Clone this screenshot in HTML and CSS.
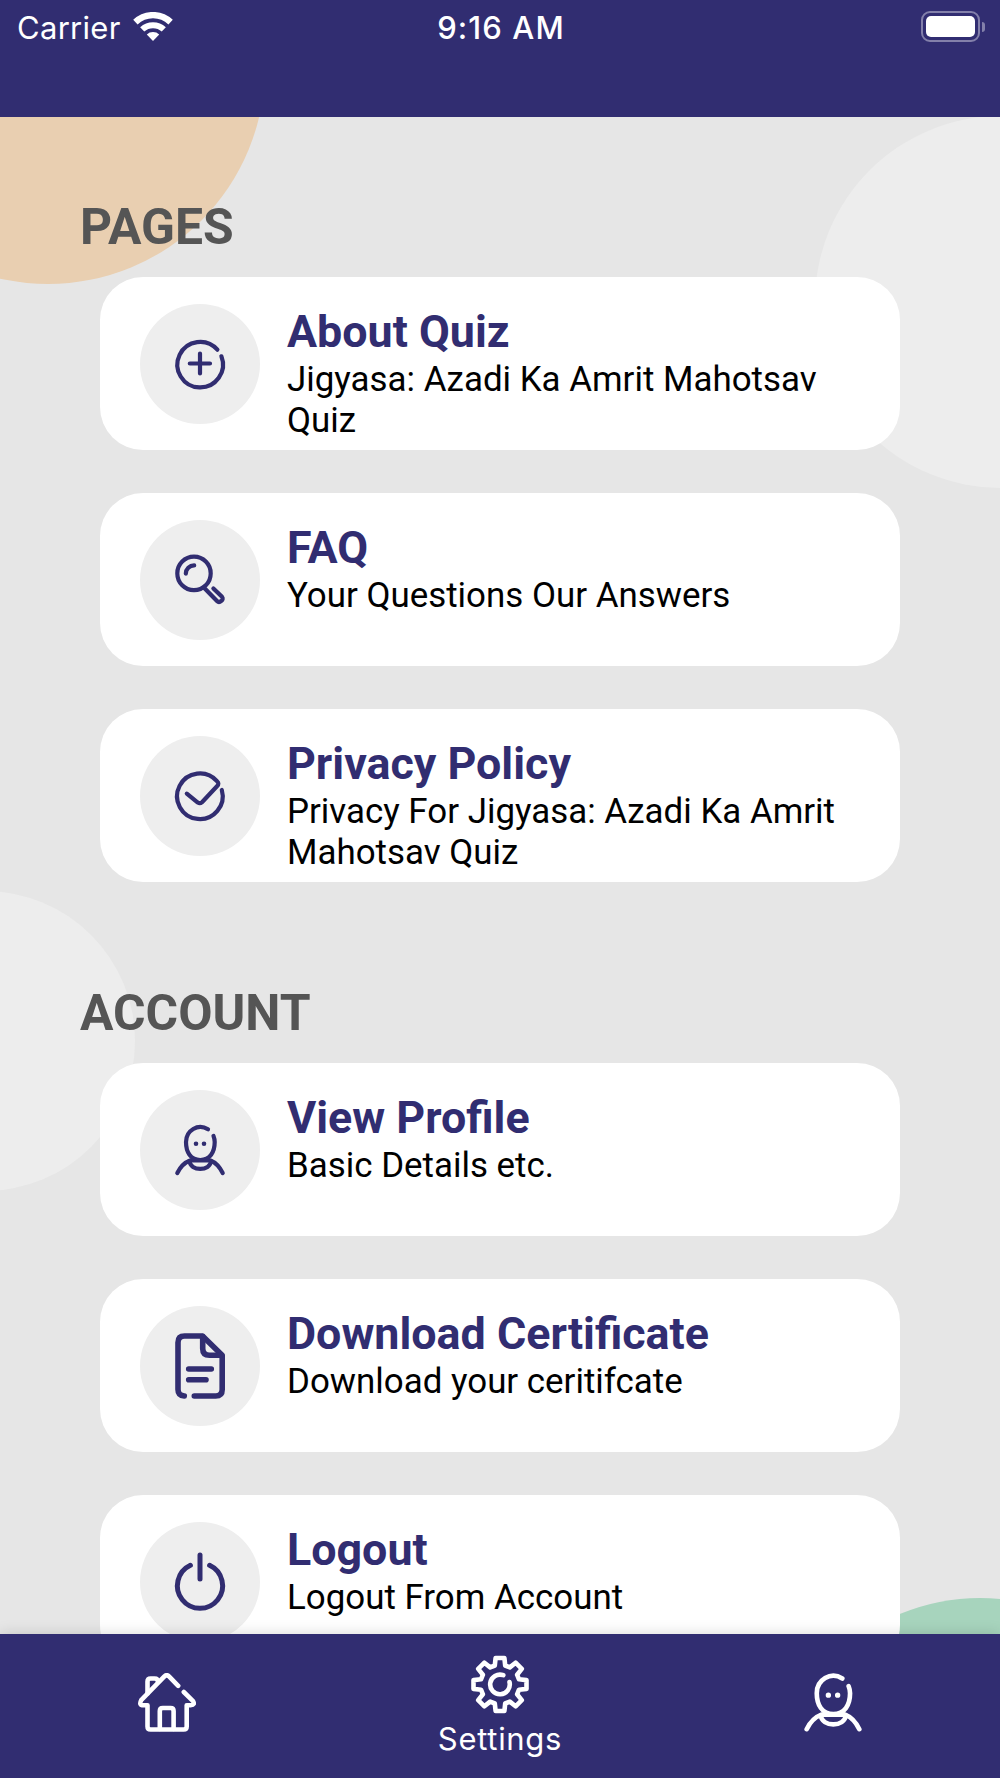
FILE: index.html
```
<!DOCTYPE html>
<html lang="en">
<head>
  <meta charset="UTF-8">
  <meta name="viewport" content="width=device-width, initial-scale=1.0">
  <title>Settings</title>
  <link rel="stylesheet" href="styles.css">
</head>
<body>
  <div class="screen">
    <header class="header">
      <div class="status-left">
        <span class="carrier">Carrier</span>
        <svg class="wifi" viewBox="0 0 40 30">
          <g fill="none" stroke="#fff">
            <path d="M2.4 10.1A25.7 25.7 0 0 1 37.6 10.1" stroke-width="6.4"/>
            <path d="M9.2 17.4A15.8 15.8 0 0 1 30.8 17.4" stroke-width="6"/>
          </g>
          <path d="M20 29L13.8 22.6A9 9 0 0 1 26.2 22.6Z" fill="#fff"/>
        </svg>
      </div>
      <span class="time">9:16 AM</span>
      <div class="status-right">
        <div class="battery"><div class="battery-level"></div></div>
        <div class="battery-tip"></div>
      </div>
    </header>

    <main class="content">
      <div class="blob blob-orange"></div>
      <div class="blob blob-right"></div>
      <div class="blob blob-left"></div>
      <div class="blob blob-green"></div>

      <section class="section">
        <h2 class="section-title">PAGES</h2>
        <div class="card-list">
          <div class="card">
            <div class="card-icon">
              <svg class="icon" viewBox="0 0 120 120">
                <path d="M77.4 45.7A22.8 22.8 0 1 0 81.4 52.3"/>
                <path d="M49.8 59.5H70M60 49.5V69.5"/>
              </svg>
            </div>
            <div class="card-text">
              <h3 class="card-title">About Quiz</h3>
              <p class="card-desc">Jigyasa: Azadi Ka Amrit Mahotsav Quiz</p>
            </div>
          </div>

          <div class="card">
            <div class="card-icon">
              <svg class="icon" viewBox="0 0 120 120">
                <circle cx="54" cy="53.4" r="16.7"/>
                <path d="M45.8 53.6A8.3 8.3 0 0 1 54.2 45.4"/>
                <path d="M63.8 67.5L77 81C79.5 83.5 84.5 79.8 82 76.8L73.4 68.4"/>
              </svg>
            </div>
            <div class="card-text">
              <h3 class="card-title">FAQ</h3>
              <p class="card-desc">Your Questions Our Answers</p>
            </div>
          </div>

          <div class="card">
            <div class="card-icon">
              <svg class="icon" viewBox="0 0 120 120">
                <path d="M81.8 54A22.8 22.8 0 1 1 77 45.2Q79.6 47.6 77.2 50L62 66.2Q60 68 57.8 66.6L46.8 57.6"/>
              </svg>
            </div>
            <div class="card-text">
              <h3 class="card-title">Privacy Policy</h3>
              <p class="card-desc">Privacy For Jigyasa: Azadi Ka Amrit Mahotsav Quiz</p>
            </div>
          </div>
        </div>
      </section>

      <section class="section">
        <h2 class="section-title">ACCOUNT</h2>
        <div class="card-list">
          <div class="card">
            <div class="card-icon">
              <svg class="icon" viewBox="0 0 120 120">
                <path d="M68 39.3C58 33 46 40.5 46 52C46 62 50.5 70 60.3 70C70 70 74.7 62 74.7 52Q74.7 49 73.5 46"/>
                <path d="M37.3 83Q42 73.5 50 70.5H70.5Q78 73.5 82.7 83"/>
                <path d="M49.5 71C50 81.5 70.5 81.5 71 71"/>
                <path class="dots" d="M56 53.7h.01M64 53.7h.01"/>
              </svg>
            </div>
            <div class="card-text">
              <h3 class="card-title">View Profile</h3>
              <p class="card-desc">Basic Details etc.</p>
            </div>
          </div>

          <div class="card">
            <div class="card-icon">
              <svg class="icon icon-bold" viewBox="0 0 120 120">
                <path d="M44.3 90Q38 89.5 38 83.5V36.5Q38 30 44.5 30H62.5L82.2 49.3V83.5Q82.2 90 75.7 90H54.3"/>
                <path d="M62.7 30.5V42.5Q62.7 49.3 69.5 49.3H81.5"/>
                <path d="M48.7 63H71.3M48.7 73.7H66"/>
              </svg>
            </div>
            <div class="card-text">
              <h3 class="card-title">Download Certificate</h3>
              <p class="card-desc">Download your ceritifcate</p>
            </div>
          </div>

          <div class="card">
            <div class="card-icon">
              <svg class="icon icon-power" viewBox="0 0 120 120">
                <path d="M60 33V57"/>
                <path d="M50.4 43.3A22.6 22.6 0 1 0 69.6 43.3"/>
              </svg>
            </div>
            <div class="card-text">
              <h3 class="card-title">Logout</h3>
              <p class="card-desc">Logout From Account</p>
            </div>
          </div>
        </div>
      </section>
    </main>

    <nav class="tab-bar">
      <div class="tab">
        <svg class="tab-icon" viewBox="0 0 58 59">
          <path d="M40.2 12.8L31 3.4Q28.7 1.2 26.4 3.4L3.2 27.2Q0.6 32.3 5.5 32.3H9.5V53.5Q9.5 56.5 12.5 56.5H45.7Q48.7 56.5 48.7 53.5V32.3H52.5Q57.6 32 54.8 27.8L45.8 19"/>
          <path d="M9.5 20.5V8.5Q9.5 5.5 12.5 5.5H16.5Q20 5.5 20 9"/>
          <path d="M21.8 56V38Q21.8 35 24.8 35H32.6Q35.6 35 35.6 38V56"/>
        </svg>
      </div>
      <div class="tab active">
        <svg class="tab-icon" viewBox="-29 -29 58 58">
          <path d="M-5.2 -19L-4.4 -26.5H4.4L5.2 -19L9.8 -17.1L15.6 -21.8L21.8 -15.6L17.1 -9.8L19 -5.2L26.5 -4.4V4.4L19 5.2L17.1 9.8L21.8 15.6L15.6 21.8L9.8 17.1L5.2 19L4.4 26.5H-4.4L-5.2 19L-9.8 17.1L-15.6 21.8L-21.8 15.6L-17.1 9.8L-19 5.2L-26.5 4.4V-4.4L-19 -5.2L-17.1 -9.8L-21.8 -15.6L-15.6 -21.8L-9.8 -17.1Z"/>
          <path d="M3.3 -9.3A9.8 9.8 0 1 0 9.5 -2.4"/>
        </svg>
        <span class="tab-label">Settings</span>
      </div>
      <div class="tab">
        <svg class="tab-icon tab-profile" viewBox="35 35 50 50">
          <path d="M68 39.3C58 33 46 40.5 46 52C46 62 50.5 70 60.3 70C70 70 74.7 62 74.7 52Q74.7 49 73.5 46"/>
          <path d="M37.3 83Q42 73.5 50 70.5H70.5Q78 73.5 82.7 83"/>
          <path d="M49.5 71C50 81.5 70.5 81.5 71 71"/>
          <path class="dots" d="M56 53.7h.01M64 53.7h.01"/>
        </svg>
      </div>
    </nav>
  </div>
</body>
</html>
```
FILE: styles.css
```
* {
  box-sizing: border-box;
  margin: 0;
  padding: 0;
}

body {
  font-family: Roboto, sans-serif;
  background: #e6e6e6;
}

.screen {
  display: flex;
  flex-direction: column;
  width: 1000px;
  height: 1778px;
  overflow: hidden;
}

/* status bar */
.header {
  display: grid;
  grid-template-columns: 1fr auto 1fr;
  align-items: start;
  flex: none;
  height: 117px;
  padding: 8px 15px 0 17px;
  background: #312d71;
  color: #fff;
  font-family: Inter, sans-serif;
  font-size: 31px;
  line-height: 39px;
}

.status-left {
  display: flex;
  gap: 12px;
}

.carrier {
  letter-spacing: 0.3px;
}

.wifi {
  width: 40px;
  height: 30px;
  margin-top: 4px;
}

.time {
  font-weight: 500;
  letter-spacing: 1.1px;
}

.status-right {
  display: flex;
  align-items: center;
  justify-content: flex-end;
  gap: 2px;
  margin-top: 3px;
}

.battery {
  width: 59px;
  height: 31px;
  padding: 3px;
  border: 2px solid #8380aa;
  border-radius: 9px;
}

.battery-level {
  height: 100%;
  border-radius: 5px;
  background: #fff;
}

.battery-tip {
  width: 3px;
  height: 10px;
  border-radius: 0 3px 3px 0;
  background: #8380aa;
}

.content {
  position: relative;
  flex: 1;
  min-height: 0;
  padding: 81px 100px 0 80px;
  overflow: hidden;
}

/* background circles */
.blob {
  position: absolute;
  border-radius: 50%;
}

.blob-orange {
  left: -169px;
  top: -267px;
  width: 434px;
  height: 434px;
  background: #e9cfb1;
}

.blob-right {
  left: 815px;
  top: -1px;
  width: 372px;
  height: 372px;
  background: #ededed;
}

.blob-left {
  left: -165px;
  top: 774px;
  width: 300px;
  height: 300px;
  background: #ededed;
}

.blob-green {
  left: 772px;
  top: 1481px;
  width: 416px;
  height: 416px;
  background: #a7d4bd;
}

.section {
  position: relative;
  margin-bottom: 101.6px;
}

.section-title {
  height: 79.4px;
  color: #555;
  font-size: 49.8px;
  line-height: 59px;
}

.card-list {
  display: flex;
  flex-direction: column;
  gap: 43px;
  padding-left: 20px;
}

.card {
  display: flex;
  gap: 27px;
  height: 173px;
  padding: 26.5px 40px 0;
  border-radius: 43px;
  background: #fff;
}

.card-icon {
  flex: none;
  width: 120px;
  height: 120px;
  border-radius: 50%;
  background: #eee;
}

.icon {
  display: block;
  width: 120px;
  height: 120px;
  fill: none;
  stroke: #312d71;
  stroke-width: 4.2;
  stroke-linecap: round;
  stroke-linejoin: round;
}

.icon-bold {
  stroke-width: 5.6;
}

.icon-power {
  stroke-width: 5;
}

.card-text {
  flex: 1;
  padding-top: 1px;
}

.card-title {
  margin-bottom: 1px;
  color: #312d71;
  font-size: 44.8px;
  line-height: 53px;
}

.card-desc {
  color: #000;
  font-size: 34.9px;
  line-height: 41.3px;
}

/* bottom navigation */
.tab-bar {
  position: relative;
  display: grid;
  grid-template-columns: repeat(3, 1fr);
  flex: none;
  height: 144px;
  background: #312d71;
  box-shadow: 0 0 14px rgba(0, 0, 0, 0.15);
}

.tab {
  display: flex;
  flex-direction: column;
  align-items: center;
  padding-top: 39px;
}

.tab.active {
  padding-top: 21px;
}

.tab-icon {
  width: 58px;
  height: 59px;
  fill: none;
  stroke: #fff;
  stroke-width: 4.6;
  stroke-linecap: round;
  stroke-linejoin: round;
}

.tab-profile {
  stroke-width: 4;
}

.tab-label {
  margin-top: 6px;
  color: #fff;
  font-family: Inter, sans-serif;
  font-size: 31px;
  line-height: 38px;
  letter-spacing: 0.7px;
}

.dots {
  stroke-width: 4.6;
}
```
